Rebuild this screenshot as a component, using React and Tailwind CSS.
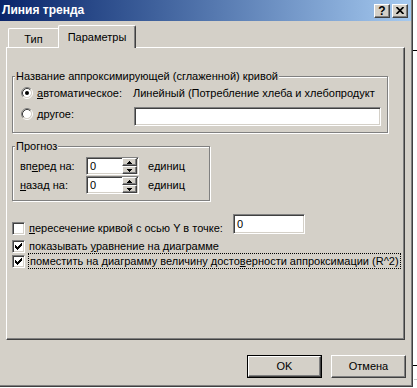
import React from "react";

const sunken =
  "border-t border-l border-b border-r border-t-[#808080] border-l-[#808080] border-b-white border-r-white shadow-[inset_1px_1px_0_#404040,inset_-1px_-1px_0_#D4D0C8]";
const raised =
  "border-t border-l border-b border-r border-t-white border-l-white border-b-[#404040] border-r-[#404040] shadow-[inset_-1px_-1px_0_#808080]";
const etched =
  "border border-[#808080] shadow-[1px_1px_0_#ffffff,inset_1px_1px_0_#ffffff]";

function Check({ checked }) {
  const cols = [
    [2, 4],
    [3, 5],
    [4, 6],
    [5, 5],
    [6, 4],
    [7, 3],
    [8, 2],
  ];
  return (
    <div className={`w-[13px] h-[13px] bg-white shrink-0 ${sunken}`}>
      {checked && (
        <svg width="11" height="11" className="block" shapeRendering="crispEdges">
          {cols.map(([x, y]) => (
            <rect key={x} x={x} y={y} width="1" height="3" fill="#000" />
          ))}
        </svg>
      )}
    </div>
  );
}

function Radio({ checked }) {
  return (
    <svg width="12" height="12" className="block shrink-0">
      <circle cx="6" cy="6" r="4.2" fill="#fff" />
      <path d="M2.11 9.89 A5.5 5.5 0 0 1 9.89 2.11" fill="none" stroke="#808080" />
      <path d="M9.89 2.11 A5.5 5.5 0 0 1 2.11 9.89" fill="none" stroke="#ffffff" />
      <path d="M2.82 9.18 A4.5 4.5 0 0 1 9.18 2.82" fill="none" stroke="#404040" />
      <path d="M9.18 2.82 A4.5 4.5 0 0 1 2.82 9.18" fill="none" stroke="#D4D0C8" />
      {checked && <circle cx="6" cy="6" r="2" fill="#000" />}
    </svg>
  );
}

function TitleBtn({ children }) {
  return (
    <div className={`w-[16px] h-[14px] bg-[#D4D0C8] flex items-center justify-center ${raised}`}>
      {children}
    </div>
  );
}

function SpinEdit() {
  return (
    <div className={`w-[53px] h-[18px] bg-white flex items-stretch shrink-0 ${sunken}`}>
      <div className="flex-1 pl-[3px] flex items-center">0</div>
      <div className="w-[15px] flex flex-col mr-px">
        <div className={`flex-1 bg-[#D4D0C8] flex items-center justify-center ${raised}`}>
          <svg width="5" height="3" className="block" shapeRendering="crispEdges">
            <polygon points="0,3 5,3 2.5,0" fill="#000" />
          </svg>
        </div>
        <div className={`flex-1 bg-[#D4D0C8] flex items-center justify-center ${raised}`}>
          <svg width="5" height="3" className="block" shapeRendering="crispEdges">
            <polygon points="0,0 5,0 2.5,3" fill="#000" />
          </svg>
        </div>
      </div>
    </div>
  );
}

export default function App() {
  return (
    <div className="relative w-[417px] h-[388px] overflow-hidden bg-white font-['Liberation_Sans',Arial,sans-serif] text-[11px] leading-[13px] text-black">
      <div className="flex flex-col w-[413px] h-[387px] bg-[#D4D0C8] border-r border-b border-[#404040] shadow-[inset_-1px_-1px_0_#808080]">
        {/* Title bar */}
        <div className="flex items-center w-[411px] h-[21px] shrink-0 bg-linear-to-r from-[#0A246A] to-[#A6CAF0]">
          <span className="pl-[2px] font-bold text-white text-[12px]">Линия тренда</span>
          <div className="ml-auto flex gap-[2px] pr-[3px]">
            <TitleBtn>
              <span className="font-bold text-[12px] leading-[12px]">?</span>
            </TitleBtn>
            <TitleBtn>
              <svg width="8" height="7" className="block">
                <path d="M0.5 0 L7.5 7 M7.5 0 L0.5 7" stroke="#000" strokeWidth="1.7" />
              </svg>
            </TitleBtn>
          </div>
        </div>

        {/* Tabs */}
        <div className="relative z-10 flex items-end h-[23px] mt-[4px] ml-[8px] -mb-px">
          <div className="w-[50px] h-[19px] mb-px border-t border-l border-white rounded-tl-[2px] flex justify-center pt-[4px]">
            Тип
          </div>
          <div className="w-[78px] h-[23px] bg-[#D4D0C8] border-t border-l border-r border-t-white border-l-white border-r-[#404040] shadow-[inset_-1px_0_0_#808080] rounded-tl-[2px] rounded-tr-[2px] flex justify-center pt-[5px]">
            Параметры
          </div>
        </div>

        {/* Panel */}
        <div className="ml-[6px] w-[399px] h-[293px] shrink-0 flex flex-col border-t border-l border-b border-r border-t-white border-l-white border-b-[#404040] border-r-[#404040] shadow-[inset_-1px_-1px_0_#808080]">
          {/* Group 1 */}
          <div className={`relative mt-[28px] ml-[5px] w-[376px] h-[57px] shrink-0 ${etched}`}>
            <span className="absolute -top-[7px] left-[2px] px-[1px] bg-[#D4D0C8] whitespace-nowrap">
              Название аппроксимирующей (сглаженной) кривой
            </span>
            <div className="mt-[10px] ml-[8px] flex items-center h-[12px]">
              <Radio checked />
              <span className="ml-[4px] w-[96px] shrink-0 whitespace-nowrap">
                <u>а</u>втоматическое:
              </span>
              <span className="whitespace-nowrap">Линейный (Потребление хлеба и хлебопродукт</span>
            </div>
            <div className="mt-[8px] ml-[8px] flex items-start">
              <div className="flex items-center h-[12px] mt-[1px]">
                <Radio />
                <span className="ml-[4px] w-[97px] shrink-0">
                  <u>д</u>ругое:
                </span>
              </div>
              <div className={`w-[247px] h-[19px] bg-white ${sunken}`} />
            </div>
          </div>

          {/* Group 2 */}
          <div className={`relative mt-[13px] ml-[5px] w-[198px] h-[55px] shrink-0 ${etched}`}>
            <span className="absolute -top-[7px] left-[2px] px-[1px] bg-[#D4D0C8]">Прогноз</span>
            <div className="mt-[10px] ml-[7px] flex items-center">
              <span className="w-[66px] shrink-0">
                вп<u>е</u>ред на:
              </span>
              <SpinEdit />
              <span className="ml-[9px]">единиц</span>
            </div>
            <div className="mt-px ml-[7px] flex items-center">
              <span className="w-[66px] shrink-0">
                <u>н</u>азад на:
              </span>
              <SpinEdit />
              <span className="ml-[9px]">единиц</span>
            </div>
          </div>

          {/* Checkboxes */}
          <div className="mt-[13px] ml-[5px] flex items-start">
            <div className="w-[221px] shrink-0 flex items-center h-[13px] mt-[8px]">
              <Check />
              <span className="ml-[4px] whitespace-nowrap">
                <u>п</u>ересечение кривой с осью Y в точке:
              </span>
            </div>
            <div className={`w-[72px] h-[20px] bg-white pl-[3px] flex items-center ${sunken}`}>0</div>
          </div>
          <div className="mt-[5px] ml-[5px] flex items-center h-[13px]">
            <Check checked />
            <span className="ml-[4px] whitespace-nowrap">
              показывать <u>у</u>равнение на диаграмме
            </span>
          </div>
          <div className="ml-[5px] flex items-center h-[16px]">
            <Check checked />
            <span className="ml-[3px] w-[373px] h-[16px] border border-dotted border-black pl-px flex items-center whitespace-nowrap">
              поместить на диаграмму величину досто<u>в</u>ерности аппроксимации (R^2)
            </span>
          </div>
        </div>

        {/* Buttons */}
        <div className="mt-[15px] flex justify-end gap-[9px] pr-[6px]">
          <div className="w-[75px] h-[23px] border border-black">
            <div className={`w-full h-full bg-[#D4D0C8] flex items-center justify-center ${raised}`}>OK</div>
          </div>
          <div className={`w-[75px] h-[23px] bg-[#D4D0C8] flex items-center justify-center ${raised}`}>
            Отмена
          </div>
        </div>
      </div>

      {/* background bits to the right of the dialog */}
      <div className="absolute left-[413px] top-[50px] w-[4px] h-px bg-black" />
      <div className="absolute left-[413px] top-[365px] w-[4px] h-px bg-black" />
      <div className="absolute left-[414px] top-[379px] w-[3px] h-px bg-[#c8c8c8]" />
    </div>
  );
}
